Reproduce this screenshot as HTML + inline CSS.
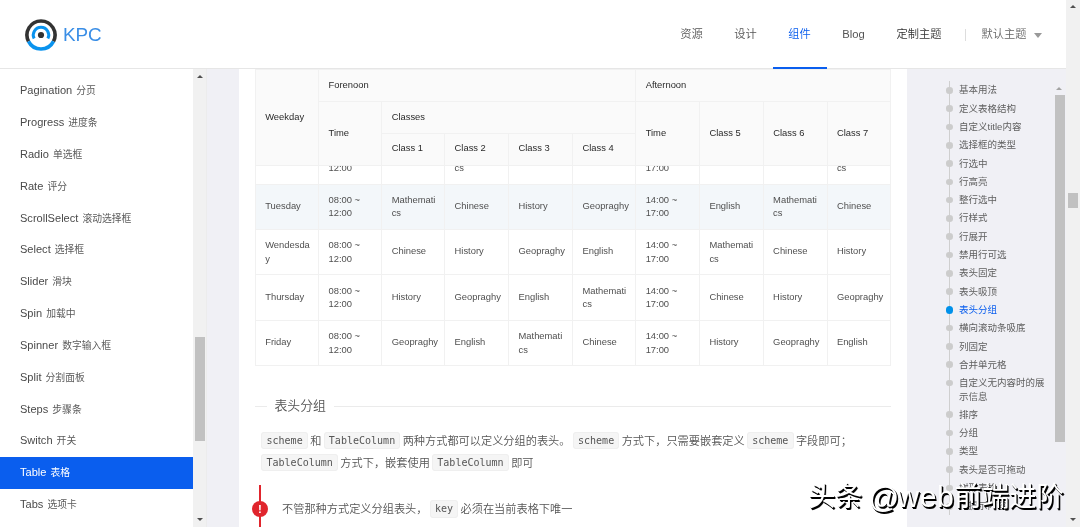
<!DOCTYPE html>
<html lang="zh-CN">
<head>
<meta charset="utf-8">
<title>KPC - Table 表格</title>
<style>
html,body{margin:0;padding:0;}
body{width:1080px;height:527px;overflow:hidden;position:relative;background:#f0f0f5;
 font-family:"Liberation Sans","Noto Sans CJK SC",sans-serif;color:#555;font-weight:350;}
#wrap{position:absolute;left:0;top:0;width:1080px;height:527px;overflow:hidden;will-change:transform;}
.abs{position:absolute;}
/* header */
#hd{position:absolute;left:0;top:0;width:1066px;height:68px;background:#fff;border-bottom:1px solid #e6e6e6;z-index:20;}
#logo{position:absolute;left:25px;top:18.5px;width:32px;height:32px;}
#brand{position:absolute;left:62.9px;top:23.5px;font-size:18.85px;line-height:21px;color:#3a8ee6;}
.nv{position:absolute;top:0;height:68px;line-height:68px;font-size:11.25px;color:#555;text-align:center;white-space:nowrap;}
.nv.on{color:#0a5eee;}
.nv.on:after{content:"";position:absolute;left:0;right:0;bottom:-0.5px;height:2px;background:#0a5eee;}
#sep{position:absolute;left:965px;top:29px;width:1px;height:12px;background:#ddd;}
#caret{position:absolute;left:1034.4px;top:32.7px;width:0;height:0;border-left:4.5px solid transparent;border-right:4.5px solid transparent;border-top:5px solid #999;}
/* sidebar */
#sb{position:absolute;left:0;top:69px;width:193px;height:458px;background:#fff;overflow:hidden;}
.si{position:absolute;left:0;width:193px;height:31.85px;line-height:31.5px;overflow:hidden;padding-left:20px;box-sizing:border-box;font-size:11.05px;color:#4a4a4a;white-space:nowrap;}
.si b{font-weight:inherit;display:inline-block;transform:translateY(0.4px);}
.si span{font-size:9.8px;color:#5a5a5a;margin-left:1px;font-weight:400;}
.si.act{background:#0a5eee;color:#fff;}
.si.act span{color:#fff;}
.track{position:absolute;background:#f1f1f1;}
.thumb{position:absolute;background:#c1c1c1;}
.arr{position:absolute;width:0;height:0;border-left:3.3px solid transparent;border-right:3.3px solid transparent;}
.arr.up{border-bottom:3.6px solid #505050;}
.arr.dn{border-top:3.6px solid #505050;}
.arr.lt.up{border-bottom-color:#a3a3a3;}
/* main */
#main{position:absolute;left:239px;top:69px;width:667.5px;height:458px;background:#fff;overflow:hidden;}
table{border-collapse:collapse;table-layout:fixed;font-size:9.4px;line-height:13.3px;color:#505050;}
td,th{border:1px solid #f1f1f1;padding:7.6px 0 10.25px 9.2px;text-align:left;vertical-align:middle;white-space:nowrap;font-weight:normal;overflow:hidden;}
#tb{position:absolute;left:16px;top:69.1px;width:635.3px;}
#th{position:absolute;left:16px;top:-0.5px;width:635.3px;background:#fafafa;color:#2a2a2a;z-index:5;}
#th th{padding-top:0;padding-bottom:0;height:32.19px;box-sizing:border-box;}
#th th.u1{padding-bottom:2px;}
#th th.u2{padding-bottom:1.4px;}
#th th.u3{padding-bottom:3.6px;}
td.two{padding-top:8.5px;padding-bottom:9.35px;}
td.two span{display:block;width:47px;white-space:normal;overflow-wrap:anywhere;}
tr.hov td{background:#f3f7fa;}
/* title */
#ttl{position:absolute;left:16px;top:326px;width:636px;height:22px;}
#ttl .ln{position:absolute;top:11px;height:1px;background:#ebebeb;}
#ttl .tx{position:absolute;left:19.5px;top:0;font-size:12.86px;line-height:22px;color:#555;white-space:nowrap;}
.p{position:absolute;left:22px;font-size:11.2px;line-height:22px;color:#555;white-space:nowrap;height:22px;}
code{font-family:"DejaVu Sans Mono","Liberation Mono",monospace;font-size:10.02px;background:#f5f5f5;border:1px solid #efefef;border-radius:3px;padding:1.9px 4.1px 2.7px;margin:0 2.4px;color:#555;position:relative;top:-0.8px;}
#bq{position:absolute;left:20px;top:416px;width:2px;height:60px;background:#e0252d;}
#bqi{position:absolute;left:12.9px;top:431.6px;width:16px;height:16px;border-radius:50%;background:#e0252d;color:#fff;font-size:11.5px;line-height:16px;font-weight:bold;text-align:center;}
/* catalog */
#cat{position:absolute;left:906.5px;top:69px;width:148px;height:458px;overflow:hidden;}
#cline{position:absolute;left:42.2px;top:12px;width:1.4px;height:434px;background:#cfcfcf;}
.ci{position:absolute;left:52.6px;width:90px;font-size:9.5px;line-height:13.5px;padding:2.4px 0;color:#606060;font-weight:400;}
.ci i{position:absolute;left:-13px;top:6.0px;width:6.6px;height:6.6px;border-radius:50%;background:#ccc;}
.ci.act{color:#0a5eee;}
.ci.act i{background:#0091ea;left:-13.6px;top:5.6px;width:7.6px;height:7.6px;}
#wm span{position:absolute;white-space:nowrap;color:#fff;z-index:50;line-height:40px;height:40px;text-shadow:0.7px 0.8px 0 #000,1.4px 1.6px 0 #000,1.8px 2.1px 0 rgba(0,0,0,.3);font-weight:400;}
</style>
</head>
<body>
<div id="wrap">
<div id="hd">
 <svg id="logo" viewBox="0 0 32 32">
  <path d="M 3.53 22.36 A 14 14 0 1 1 28.47 22.36" fill="none" stroke="#333" stroke-width="3.6"/>
  <path d="M 28.47 22.36 A 14 14 0 0 1 3.53 22.36" fill="none" stroke="#0a93ee" stroke-width="3.6"/>
  <path d="M 9.15 19.5 A 7.7 7.7 0 1 1 22.85 19.5" fill="none" stroke="#0a93ee" stroke-width="3"/>
  <circle cx="16" cy="16" r="3.1" fill="#333"/>
 </svg>
 <div id="brand">KPC</div>
 <div class="nv" style="left:664.6px;width:54px">资源</div>
 <div class="nv" style="left:718.6px;width:54px">设计</div>
 <div class="nv on" style="left:772.6px;width:54px">组件</div>
 <div class="nv" style="left:826.6px;width:54px">Blog</div>
 <div class="nv" style="left:880.6px;width:77px;color:#333">定制主题</div>
 <div id="sep"></div>
 <div class="nv" style="left:981px;width:46px;color:#666">默认主题</div>
 <div id="caret"></div>
</div>

<div id="sb">
<div class="si" style="top:6.10px"><b>Pagination <span>分页</span></b></div>
<div class="si" style="top:37.95px"><b>Progress <span>进度条</span></b></div>
<div class="si" style="top:69.80px"><b>Radio <span>单选框</span></b></div>
<div class="si" style="top:101.65px"><b>Rate <span>评分</span></b></div>
<div class="si" style="top:133.50px"><b>ScrollSelect <span>滚动选择框</span></b></div>
<div class="si" style="top:165.35px"><b>Select <span>选择框</span></b></div>
<div class="si" style="top:197.20px"><b>Slider <span>滑块</span></b></div>
<div class="si" style="top:229.05px"><b>Spin <span>加载中</span></b></div>
<div class="si" style="top:260.90px"><b>Spinner <span>数字输入框</span></b></div>
<div class="si" style="top:292.75px"><b>Split <span>分割面板</span></b></div>
<div class="si" style="top:324.60px"><b>Steps <span>步骤条</span></b></div>
<div class="si" style="top:356.45px"><b>Switch <span>开关</span></b></div>
<div class="si act" style="top:388.30px"><b>Table <span>表格</span></b></div>
<div class="si" style="top:420.15px"><b>Tabs <span>选项卡</span></b></div>
</div>
<div class="track" style="left:193px;top:69px;width:13.6px;height:458px"></div>
<div class="abs" style="left:205.8px;top:69px;width:1px;height:458px;background:#ececec"></div>
<div class="arr up" style="left:196.6px;top:74.8px"></div>
<div class="thumb" style="left:194.6px;top:337.4px;width:10px;height:103.4px"></div>
<div class="arr dn" style="left:196.6px;top:518px"></div>

<div id="main">
 <table id="th">
  <colgroup><col style="width:63.35px"><col style="width:63.15px"><col style="width:62.9px"><col style="width:63.95px"><col style="width:63.95px"><col style="width:63.2px"><col style="width:63.76px"><col style="width:63.74px"><col style="width:63.8px"><col style="width:63.5px"></colgroup>
  <tr><th rowspan="3" class="u1">Weekday</th><th colspan="5">Forenoon</th><th colspan="4">Afternoon</th></tr>
  <tr><th rowspan="2" class="u2">Time</th><th colspan="4" class="u1">Classes</th><th rowspan="2" class="u2">Time</th><th rowspan="2" class="u2">Class 5</th><th rowspan="2" class="u2">Class 6</th><th rowspan="2" class="u2">Class 7</th></tr>
  <tr><th class="u3">Class 1</th><th class="u3">Class 2</th><th class="u3">Class 3</th><th class="u3">Class 4</th></tr>
 </table>
 <table id="tb">
  <colgroup><col style="width:63.35px"><col style="width:63.15px"><col style="width:62.9px"><col style="width:63.95px"><col style="width:63.95px"><col style="width:63.2px"><col style="width:63.76px"><col style="width:63.74px"><col style="width:63.8px"><col style="width:63.5px"></colgroup>
<tr><td>Monday</td><td class="two"><span>08:00 ~ 12:00</span></td><td>English</td><td class="two"><span>Mathematics</span></td><td>Chinese</td><td>History</td><td class="two"><span>14:00 ~ 17:00</span></td><td>Geopraghy</td><td>English</td><td class="two"><span>Mathematics</span></td></tr>
<tr class="hov"><td>Tuesday</td><td class="two"><span>08:00 ~ 12:00</span></td><td class="two"><span>Mathematics</span></td><td>Chinese</td><td>History</td><td>Geopraghy</td><td class="two"><span>14:00 ~ 17:00</span></td><td>English</td><td class="two"><span>Mathematics</span></td><td>Chinese</td></tr>
<tr><td class="two"><span>Wendesday</span></td><td class="two"><span>08:00 ~ 12:00</span></td><td>Chinese</td><td>History</td><td>Geopraghy</td><td>English</td><td class="two"><span>14:00 ~ 17:00</span></td><td class="two"><span>Mathematics</span></td><td>Chinese</td><td>History</td></tr>
<tr><td>Thursday</td><td class="two"><span>08:00 ~ 12:00</span></td><td>History</td><td>Geopraghy</td><td>English</td><td class="two"><span>Mathematics</span></td><td class="two"><span>14:00 ~ 17:00</span></td><td>Chinese</td><td>History</td><td>Geopraghy</td></tr>
<tr><td>Friday</td><td class="two"><span>08:00 ~ 12:00</span></td><td>Geopraghy</td><td>English</td><td class="two"><span>Mathematics</span></td><td>Chinese</td><td class="two"><span>14:00 ~ 17:00</span></td><td>History</td><td>Geopraghy</td><td>English</td></tr>
 </table>
 <div id="ttl"><div class="ln" style="left:0;width:12px"></div><div class="tx">表头分组</div><div class="ln" style="left:78.5px;right:0"></div></div>
 <div class="p" style="top:360.5px;left:20px"><code>scheme</code>和<code>TableColumn</code>两种方式都可以定义分组的表头。<code>scheme</code>方式下，只需要嵌套定义<code>scheme</code>字段即可；</div>
 <div class="p" style="top:382.5px;left:20px"><code>TableColumn</code>方式下，嵌套使用<code>TableColumn</code>即可</div>
 <div id="bq"></div><div id="bqi">!</div>
 <div class="p" style="top:428.7px;left:43px">不管那种方式定义分组表头，<code>key</code>必须在当前表格下唯一</div>
</div>

<div id="cat">
 <div id="cline"></div>
<div class="ci" style="top:12.05px"><i></i>基本用法</div>
<div class="ci" style="top:30.34px"><i></i>定义表格结构</div>
<div class="ci" style="top:48.63px"><i></i>自定义title内容</div>
<div class="ci" style="top:66.92px"><i></i>选择框的类型</div>
<div class="ci" style="top:85.21px"><i></i>行选中</div>
<div class="ci" style="top:103.50px"><i></i>行高亮</div>
<div class="ci" style="top:121.79px"><i></i>整行选中</div>
<div class="ci" style="top:140.08px"><i></i>行样式</div>
<div class="ci" style="top:158.37px"><i></i>行展开</div>
<div class="ci" style="top:176.66px"><i></i>禁用行可选</div>
<div class="ci" style="top:194.95px"><i></i>表头固定</div>
<div class="ci" style="top:213.24px"><i></i>表头吸顶</div>
<div class="ci act" style="top:231.53px"><i></i>表头分组</div>
<div class="ci" style="top:249.82px"><i></i>横向滚动条吸底</div>
<div class="ci" style="top:268.11px"><i></i>列固定</div>
<div class="ci" style="top:286.40px"><i></i>合并单元格</div>
<div class="ci" style="top:304.69px"><i></i>自定义无内容时的展<br>示信息</div>
<div class="ci" style="top:336.48px"><i></i>排序</div>
<div class="ci" style="top:354.77px"><i></i>分组</div>
<div class="ci" style="top:373.06px"><i></i>类型</div>
<div class="ci" style="top:391.35px"><i></i>表头是否可拖动</div>
<div class="ci" style="top:409.64px"><i></i>树形表格</div>
<div class="ci" style="top:427.93px"><i></i>行提示内容</div>
</div>
<div class="arr up lt" style="left:1056.4px;top:86.8px"></div>
<div class="thumb" style="left:1054.6px;top:94.7px;width:10.4px;height:347px"></div>

<div class="track" style="left:1066px;top:0;width:14px;height:527px;z-index:30"></div>
<div class="arr up" style="left:1069.7px;top:5.2px;z-index:31"></div>
<div class="thumb" style="left:1067.9px;top:193.3px;width:10.3px;height:15.2px;z-index:31"></div>
<div class="arr dn" style="left:1069.7px;top:517.6px;z-index:31"></div>

<div id="wm"><span style="left:808.4px;top:477.4px;font-size:27px">头条 </span><span style="left:868.5px;top:477px;font-size:30.3px;letter-spacing:0.5px"><i style="font-style:normal;position:relative;top:1.2px;margin-right:-2.46px">@</i>web</span><span style="left:954.6px;top:477.4px;font-size:27.3px">前端进阶</span></div>
</div>
</body>
</html>
